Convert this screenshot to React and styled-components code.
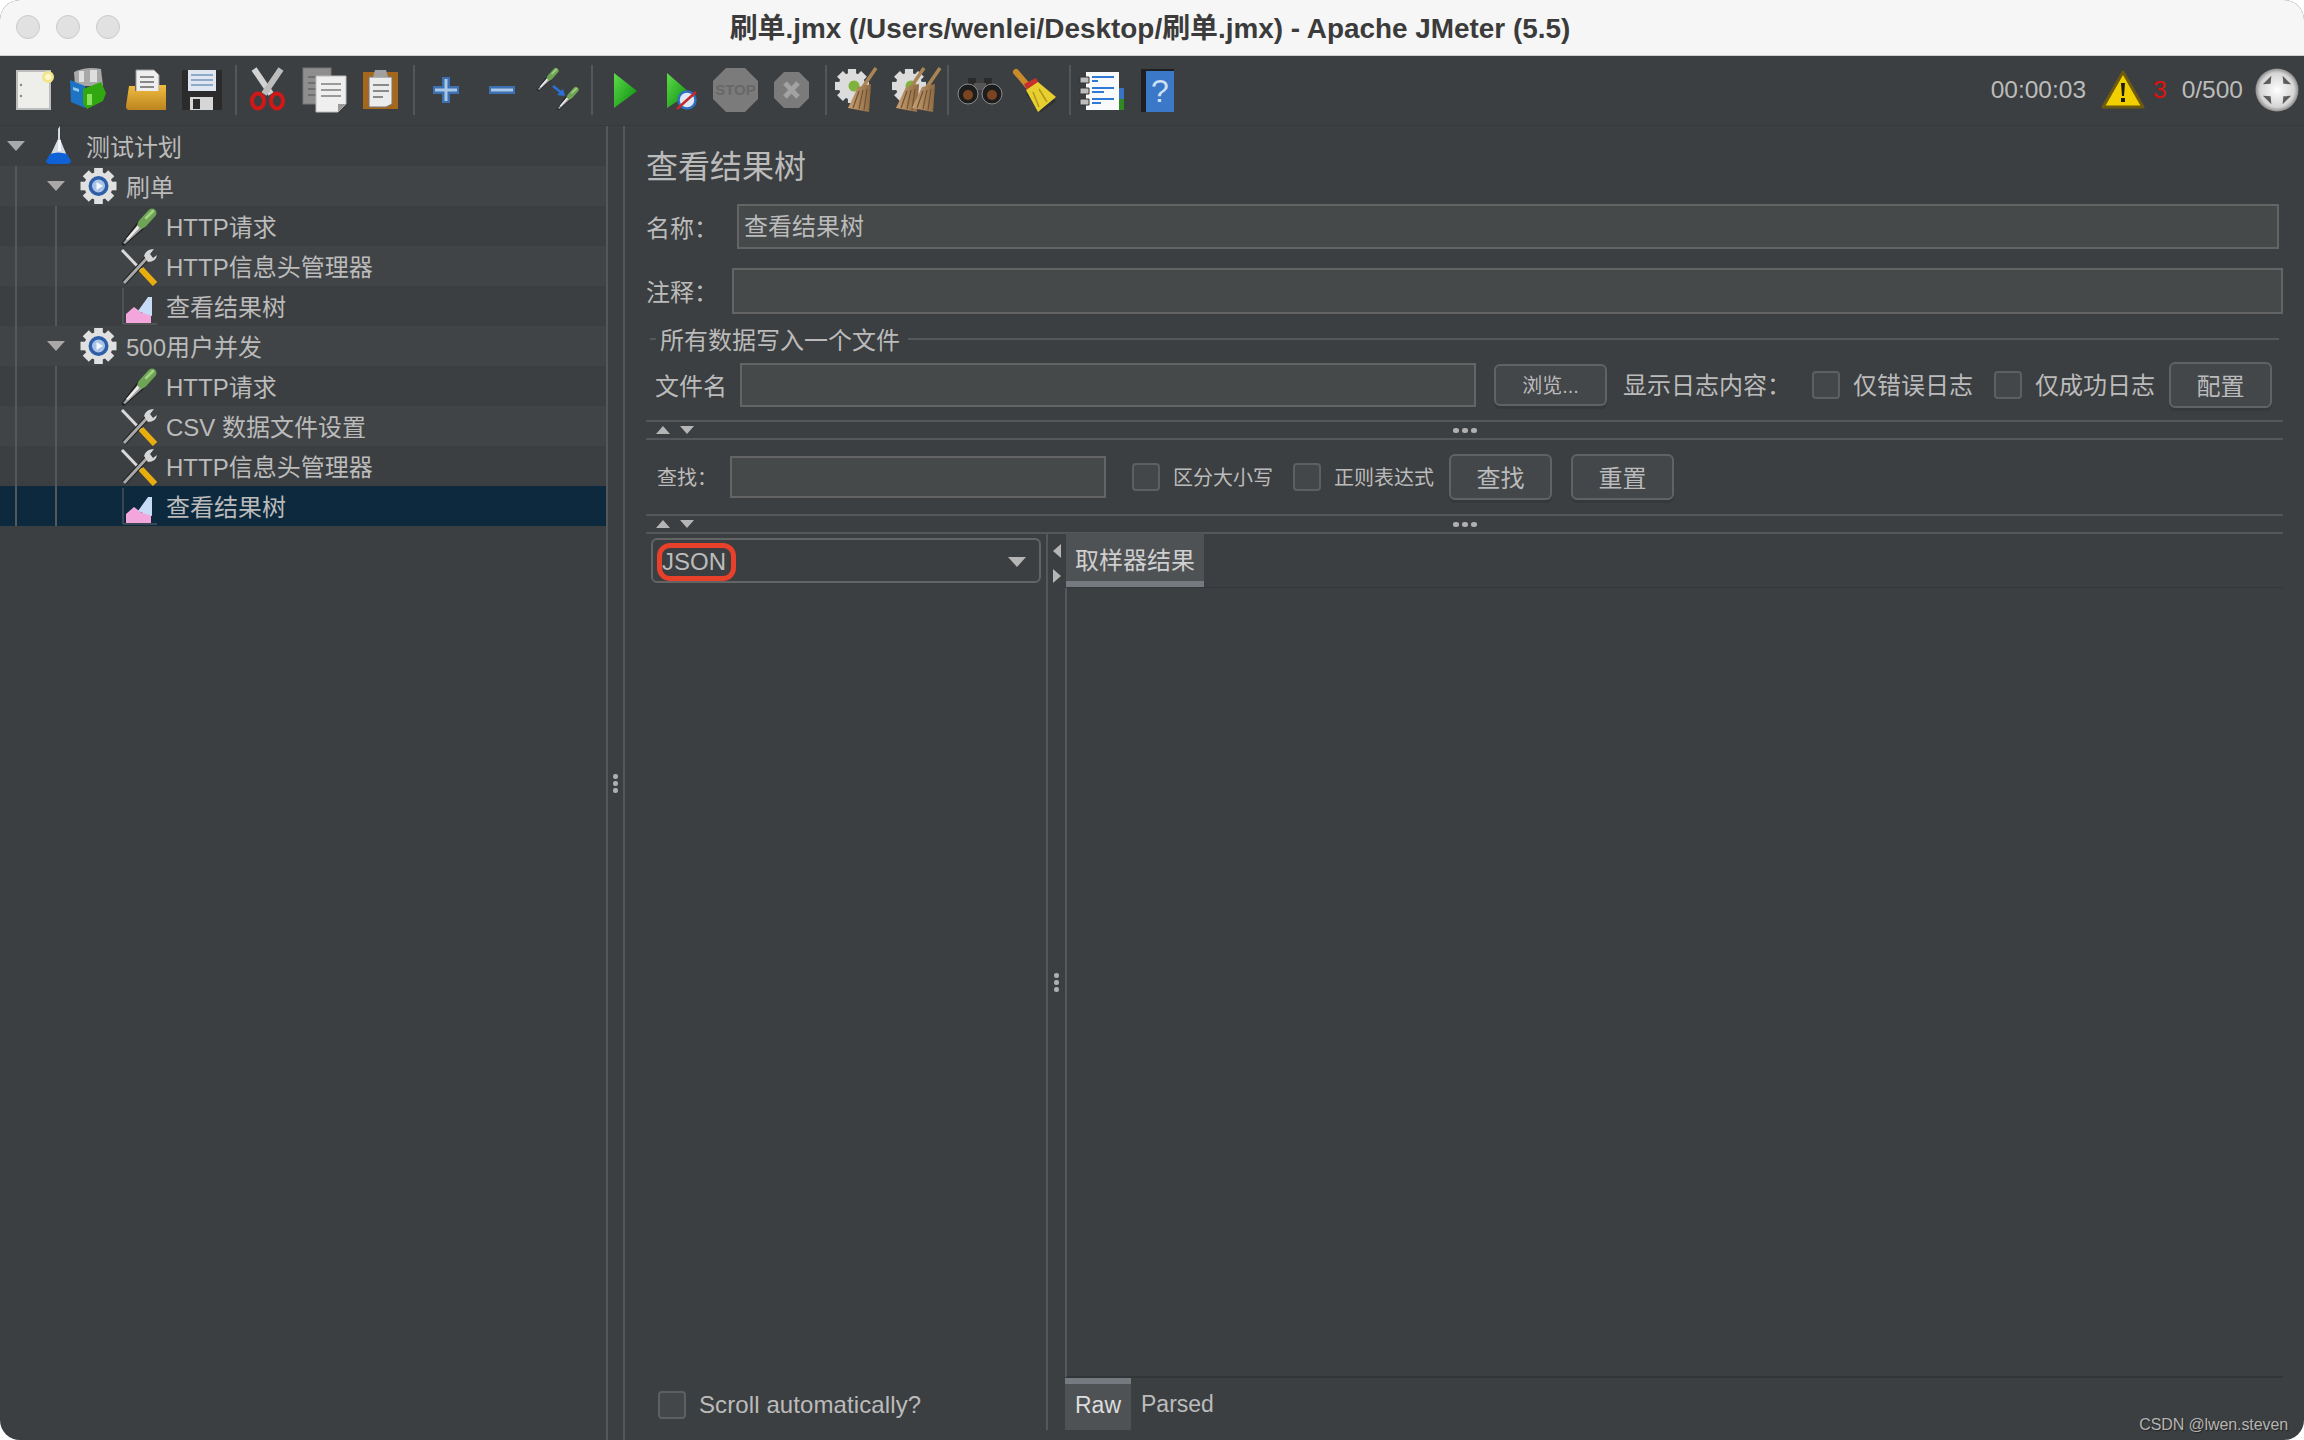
import React from 'react';
import styled, { createGlobalStyle } from 'styled-components';

const Global = createGlobalStyle`
  html, body { margin: 0; padding: 0; background: #fff; }
  * { box-sizing: border-box; }
  #root { width: 2304px; height: 1440px; }
`;
const FONT = `"Liberation Sans", "Noto Sans CJK SC", sans-serif`;
const Win = styled.div`
  width: 2304px; height: 1440px; border-radius: 20px; overflow: hidden; position: relative;
  background: #3c3f41; color: #bbbbbb; font-family: ${FONT}; font-size: 24px;
  display: flex; flex-direction: column;
`;
const TitleBar = styled.div`
  height: 56px; flex: none; background: #f6f6f6; border-bottom: 1px solid #d0d0d0;
  display: grid; grid-template-columns: 1fr auto 1fr; align-items: center; padding: 0 0 4px 16px;
`;
const Lights = styled.div`display: flex; gap: 16px; transform: translateY(1px);`;
const Light = styled.span`width: 24px; height: 24px; border-radius: 50%; background: #e1e1e1; border: 1px solid #c9c9c9;`;
const TitleText = styled.div`font-size: 27.9px; font-weight: 700; color: #3b3b3b; transform: translateX(-10px);`;
const Toolbar = styled.div`
  height: 70px; flex: none; display: flex; align-items: center; padding: 0 5px 2px 7px;
  background: #3c3f41; border-bottom: 1px solid #36393b;
`;
const ToolGroup = styled.div`display: flex;`;
const Sep = styled.div`width: 2px; height: 50px; background: #54575a; margin: 0 4px;`;
const ToolSvg = styled.svg`width: 56px; height: 48px; display: block; flex: none;`;
const Status = styled.div`margin-left: auto; display: flex; align-items: center; font-size: 24.5px;`;
const Warn = styled.svg`width: 44px; height: 40px; margin: 0 8px 0 15px;`;
const WarnCount = styled.span`color: #e01010; margin-right: 15px;`;
const Rotor = styled.svg`width: 44px; height: 44px; margin-left: 12px;`;
const Main = styled.div`flex: 1; display: flex; min-height: 0;`;
const Tree = styled.div`width: 608px; flex: none; border-right: 2px solid #55585a;`;
const Row = styled.div`
  height: 40px; position: relative; display: flex; align-items: center;
  padding-left: ${p => p.$level * 40}px;
  background: ${p => (p.$sel ? '#0d293e' : p.$stripe ? '#414446' : '#3c3f41')};
`;
const Guide = styled.i`position: absolute; left: ${p => p.$x}px; top: 0; bottom: 0; width: 2px; background: #55585a;`;
const CaretSlot = styled.span`width: 32px; flex: none; display: flex; justify-content: center;`;
const Caret = styled.span`width: 0; height: 0; border-left: 9px solid transparent; border-right: 9px solid transparent; border-top: 10px solid #a9a9a9;`;
const NodeIcon = styled.svg`width: 37px; height: 40px; flex: none; margin-left: 8px; margin-right: 9px;`;
const NodeText = styled.span`padding-bottom: 2px;`;
const Divider = styled.div`width: 17px; flex: none; border-right: 2px solid #55585a; display: flex; align-items: center; justify-content: center;`;
const Dots = styled.div`display: flex; flex-direction: ${p => (p.$row ? 'row' : 'column')}; gap: ${p => (p.$row ? 3 : 2)}px;`;
const Dot = styled.i`width: ${p => (p.$wide ? 6 : 5)}px; height: 5px; border-radius: 45%; background: #b0b0b0;`;
const Right = styled.div`flex: 1; min-width: 0; padding: 0 21px 10px 21px; display: flex; flex-direction: column;`;
const Heading = styled.div`font-size: 32px; line-height: 42px; padding-top: 20px; height: 78px; flex: none;`;
const FormRow = styled.div`display: flex; align-items: center; height: ${p => p.$h}px; margin: ${p => p.$m || '0'}; flex: none;`;
const FieldLabel = styled.div`
  width: ${p => p.$w}px; flex: none; font-size: ${p => p.$fs || 24}px; white-space: nowrap;
  margin-left: ${p => p.$ml || 0}px; padding-bottom: ${p => p.$up || 0}px;
`;
const Field = styled.div`
  height: ${p => p.$h || 45}px; flex: ${p => (p.$w ? 'none' : 1)}; width: ${p => (p.$w ? `${p.$w}px` : 'auto')};
  background: #45494a; border: 2px solid #646464; padding-left: 5px; line-height: 41px;
`;
const Legend = styled.div`display: flex; align-items: center; height: 30px; margin: 10px 4px 0 4px; flex: none;`;
const LegendLine = styled.i`height: 2px; background: #55585a; flex: ${p => (p.$w ? 'none' : 1)}; width: ${p => p.$w || 0}px;`;
const LegendText = styled.span`padding: 0 8px 2px 4px; white-space: nowrap;`;
const Btn = styled.div`
  width: ${p => p.$w}px; height: ${p => p.$h}px; flex: none; margin-left: ${p => p.$ml || 0}px;
  display: flex; align-items: center; justify-content: center; font-size: ${p => p.$fs || 24}px; padding-bottom: 2px;
  background: #43474a; border: 2px solid #606365; border-radius: 6px; box-shadow: 0 3px 0 #36393b;
`;
const Check = styled.span`width: 28px; height: 28px; flex: none; margin-left: ${p => p.$ml || 0}px; margin-right: ${p => p.$mr || 13}px; background: #434749; border: 2px solid #5c6062; border-radius: 4px;`;
const CheckText = styled.span`font-size: ${p => p.$fs || 24}px; white-space: nowrap; padding-bottom: ${p => p.$up || 0}px;`;
const Split = styled.div`
  height: 20px; flex: none; border-top: 2px solid #55585a; border-bottom: 2px solid #55585a;
  display: grid; grid-template-columns: 1fr auto 1fr; align-items: center;
`;
const SplitArrows = styled.div`display: flex; gap: 10px; padding-left: 10px;`;
const ArrowUp = styled.i`width: 0; height: 0; border-left: 7px solid transparent; border-right: 7px solid transparent; border-bottom: 8px solid #b5b5b5;`;
const ArrowDown = styled.i`width: 0; height: 0; border-left: 7px solid transparent; border-right: 7px solid transparent; border-top: 8px solid #b5b5b5;`;
const Lower = styled.div`flex: 1; min-height: 0; display: flex;`;
const LeftCol = styled.div`width: 402px; flex: none; border-right: 2px solid #55585a; display: flex; flex-direction: column; justify-content: space-between; padding: 4px 5px 11px 5px;`;
const Combo = styled.div`
  position: relative; height: 45px; width: 390px; border: 2px solid #646464; border-radius: 6px;
  display: flex; align-items: center; padding: 2px 13px 0 9px; justify-content: space-between;
`;
const ComboArrow = styled.i`width: 0; height: 0; border-left: 9px solid transparent; border-right: 9px solid transparent; border-top: 10px solid #b5b5b5;`;
const Annot = styled.i`position: absolute; left: 4px; top: 3px; width: 79px; height: 38px; border: 5px solid #e8402a; border-radius: 13px;`;
const ScrollRow = styled.div`display: flex; align-items: center; padding-left: 7px; letter-spacing: .1px;`;
const MiniSplit = styled.div`width: 17px; flex: none; display: grid; grid-template-rows: 1fr auto 1fr; justify-items: center;`;
const MiniArrows = styled.div`display: flex; flex-direction: column; gap: 11px; padding-top: 10px;`;
const ArrowL = styled.i`width: 0; height: 0; border-top: 7px solid transparent; border-bottom: 7px solid transparent; border-right: 8px solid #b5b5b5;`;
const ArrowR = styled.i`width: 0; height: 0; border-top: 7px solid transparent; border-bottom: 7px solid transparent; border-left: 8px solid #b5b5b5;`;
const Results = styled.div`flex: 1; min-width: 0; display: flex; flex-direction: column; margin-top: -1px;`;
const TabTop = styled.div`height: 55px; flex: none; border-bottom: 1px solid #35383a; display: flex; margin-left: 1px;`;
const TabActive = styled.div`
  width: 138px; background: #4e5254; border-bottom: 6px solid #747a80; display: flex; align-items: center; justify-content: center; padding-top: 3px; color: #cfcfcf;
`;
const ResultBody = styled.div`flex: 1; border-left: 2px solid #55585a; border-bottom: 2px solid #323537;`;
const TabBottom = styled.div`height: 52px; flex: none; display: flex; font-size: 23px; align-items: stretch;`;
const RawTab = styled.div`
  width: 66px; background: #4e5254; border-top: 6px solid #747a80; display: flex; align-items: center; justify-content: center; color: #dddddd; padding-bottom: 4px;
`;
const ParsedTab = styled.div`padding-left: 10px; display: flex; align-items: center; padding-bottom: 0;`;
const Mark = styled.div`
  position: absolute; right: 16px; bottom: 6px; font-size: 16px; letter-spacing: -.1px; color: #b4b4b4; text-shadow: 1px 1px 1px #222;
`;

const Grad = () => (
  <svg width="0" height="0" style={{ position: 'absolute' }}>
    <defs>
      <linearGradient id="gplay" x1="0" y1="0" x2="1" y2="1">
        <stop offset="0" stopColor="#5fdc4a" /><stop offset="1" stopColor="#058a0a" />
      </linearGradient>
      <linearGradient id="gbroom" x1="0" y1="0" x2="1" y2="0">
        <stop offset="0" stopColor="#c9a173" /><stop offset="1" stopColor="#8f6a42" />
      </linearGradient>
      <radialGradient id="grotor">
        <stop offset="0" stopColor="#ffffff" /><stop offset=".8" stopColor="#d4d4d4" /><stop offset="1" stopColor="#8c8c8c" />
      </radialGradient>
      <linearGradient id="gfolder" x1="0" y1="0" x2="0" y2="1">
        <stop offset="0" stopColor="#f0bd3f" /><stop offset="1" stopColor="#bd8420" />
      </linearGradient>
    </defs>
  </svg>
);

const GearShape = ({ cx, cy, r, fill = '#dcdcdc' }) => (
  <g>
    {[0, 45, 90, 135].map(a => (
      <rect key={a} x={cx - r * 0.24} y={cy - r} width={r * 0.48} height={r * 2} fill={fill} transform={`rotate(${a} ${cx} ${cy})`} />
    ))}
    <circle cx={cx} cy={cy} r={r * 0.78} fill={fill} />
  </g>
);
const Broom = ({ dx = 0 }) => (
  <g transform={`translate(${dx} 0)`}>
    <line x1="45" y1="2" x2="32" y2="21" stroke="#a98555" strokeWidth="3.5" />
    <path d="M27 21 L40 18 L38 46 L17 42Z" fill="url(#gbroom)" />
    <path d="M28 25 L22 42 M32 24 L28 43 M36 23 L33 44" stroke="#6f5236" strokeWidth="1.2" />
  </g>
);
const Pipette = ({ x = 0, y = 0, s = 1 }) => (
  <g transform={`translate(${x} ${y}) scale(${s})`}>
    <path d="M1 37 L19 13 L26 20 L4 39Z" fill="#1f1f1f" />
    <path d="M3 36 L19 16 L24 20 L5 37Z" fill="#a2a2a2" />
    <path d="M6 32 L19 17 L21 19 L8 33Z" fill="#ececec" />
    <line x1="22" y1="17" x2="32" y2="6" stroke="#6fa355" strokeWidth="9" strokeLinecap="round" />
    <line x1="26" y1="11" x2="33" y2="4" stroke="#a4d484" strokeWidth="2.5" strokeLinecap="round" />
  </g>
);

const tools = {
  new: <><rect x="10" y="5" width="33" height="38" fill="#eeeeea" stroke="#bdbdbd" strokeWidth="2" /><circle cx="41" cy="11" r="6" fill="#f3e58d" /><circle cx="41" cy="11" r="3" fill="#fff8cc" /><circle cx="14" cy="19" r="1.2" fill="#888" /><circle cx="14" cy="30" r="1.2" fill="#888" /></>,
  templates: <><path d="M11 6 Q24 0 38 3 L40 20 L12 20Z" fill="#a8a8a8" /><path d="M16 5h5v11h-5zM27 4h7v12h-7z" fill="#dedede" /><path d="M7 14 L22 20 L22 42 L8 36Z" fill="#1d73c4" /><path d="M10 21l6 2v3l-6-2z" fill="#8fc7ee" /><path d="M20 23 L38 16 L43 27 L40 35 L24 43 L20 38Z" fill="#31a710" /><path d="M24 28h5v11h-5z" fill="#8be05f" /></>,
  open: <><path d="M17 4h18l5 5v20H17z" fill="#eeeeee" stroke="#999" /><path d="M21 11h14M21 16h14M21 21h14" stroke="#888" strokeWidth="2" /><path d="M10 20 H16 V25 H40 V19 H47 V44 H10 Q7 44 7 40Z" fill="url(#gfolder)" /></>,
  save: <><path d="M7 4h40v40H7z" fill="#2b2b2b" /><rect x="13" y="4" width="28" height="21" fill="#dfe6f0" /><path d="M16 9h22M16 14h22M16 19h22" stroke="#8fa9c9" strokeWidth="2" /><rect x="15" y="31" width="23" height="13" fill="#d6d6d6" /><rect x="18" y="33" width="7" height="10" fill="#2b2b2b" /></>,
  cut: <><line x1="13" y1="3" x2="30" y2="28" stroke="#d2d2d2" strokeWidth="6" /><line x1="40" y1="3" x2="23" y2="28" stroke="#bdbdbd" strokeWidth="6" /><ellipse cx="17" cy="35" rx="6" ry="7.5" fill="none" stroke="#d01818" strokeWidth="4" /><ellipse cx="36" cy="35" rx="6" ry="7.5" fill="none" stroke="#d01818" strokeWidth="4" /></>,
  copy: <><rect x="6" y="2" width="28" height="36" fill="#8e8e8e" stroke="#777" /><path d="M11 11h18M11 17h18M11 23h18M11 29h18" stroke="#6f6f6f" strokeWidth="2" /><path d="M19 10h30v28l-8 8H19z" fill="#efefef" stroke="#bbb" /><path d="M24 18h20M24 24h20M24 30h20" stroke="#9a9a9a" strokeWidth="2" /><path d="M41 46v-8h8z" fill="#999" /></>,
  paste: <><rect x="10" y="6" width="35" height="37" fill="#a5671c" /><path d="M16 11h23v27l-6 3H16z" fill="#ececec" stroke="#777" /><path d="M20 19h16M20 25h16M20 31h10" stroke="#8a8a8a" strokeWidth="2" /><path d="M20 11 L22 4 H33 L35 11Z" fill="#a0a0a0" /></>,
  plus: <><path d="M27 11v26M14 24h26" stroke="#3d70b0" strokeWidth="8" /><path d="M27 13v22M16 24h22" stroke="#a9c7e8" strokeWidth="3" /></>,
  minus: <><path d="M14 24h26" stroke="#3d70b0" strokeWidth="8" /><path d="M16 24h22" stroke="#a9c7e8" strokeWidth="3" /></>,
  toggle: <><Pipette x="5" y="1" s="0.62" /><Pipette x="25" y="20" s="0.62" /><path d="M22 20 L32 28" stroke="#2a72d8" strokeWidth="2.5" /><path d="M34 30l-8-1 6-6z" fill="#2a72d8" /></>,
  start: <path d="M17 7 L40 25 L17 42Z" fill="url(#gplay)" />,
  startNo: <><path d="M14 7 L37 27 L14 42Z" fill="url(#gplay)" /><circle cx="34" cy="34" r="8.5" fill="#dfe9f6" stroke="#2f6fc0" strokeWidth="2.5" /><line x1="24" y1="43" x2="43" y2="26" stroke="#c8282a" strokeWidth="2.5" /></>,
  stop: <><path d="M17 2h19l13 13v18L36 46H17L4 33V15z" fill="#7b7b7b" /><text x="26.5" y="29" fontSize="15" fontFamily="Liberation Sans" fontWeight="700" textAnchor="middle" fill="#686868">STOP</text></>,
  shut: <><path d="M19 6h15l10 10v16L34 42H19L9 32V16z" fill="#7b7b7b" /><path d="M20 17l13 14M33 17L20 31" stroke="#a2a2a2" strokeWidth="5" /></>,
  clear: <><GearShape cx="21" cy="20" r="17" /><circle cx="23" cy="20" r="5.5" fill="#7fb23e" /><Broom /></>,
  clearAll: <><GearShape cx="22" cy="20" r="17" /><circle cx="24" cy="20" r="5.5" fill="#7fb23e" /><Broom dx="-8" /><Broom dx="8" /></>,
  search: <><rect x="15" y="12" width="8" height="14" fill="#2a2a2a" /><rect x="31" y="12" width="8" height="14" fill="#2a2a2a" /><rect x="21" y="17" width="12" height="7" fill="#555" /><circle cx="15" cy="28" r="10" fill="#1d1d1d" stroke="#8c8c8c" /><circle cx="39" cy="28" r="10" fill="#1d1d1d" stroke="#8c8c8c" /><circle cx="15" cy="29" r="5" fill="#7a4520" /><circle cx="39" cy="29" r="5" fill="#7a4520" /></>,
  broom: <><path d="M17 28 L29 20 L47 35 L32 46Z" fill="#22252a" opacity=".55" /><line x1="7" y1="6" x2="19" y2="20" stroke="#c98a2c" strokeWidth="6" strokeLinecap="round" /><path d="M15 18 L27 12 L31 19 L19 26Z" fill="#c7312b" /><path d="M17 24 L29 16 L47 31 L29 46Z" fill="#e6cf2e" /><path d="M24 26 L30 41M30 23 L38 36" stroke="#b3971c" strokeWidth="1.5" /></>,
  log: <><rect x="41" y="22" width="8" height="13" fill="#3973c6" /><rect x="41" y="33" width="8" height="11" fill="#2f8a22" /><rect x="11" y="6" width="33" height="38" fill="#fafafa" /><path d="M5 11h9v6H5zM5 22h9v6H5zM5 33h9v6H5z" fill="#bdbdbd" stroke="#333" strokeWidth="1" /><path d="M17 11h22M17 15h6M17 22h22M17 26h12M17 33h22M17 37h9" stroke="#2f7ad6" strokeWidth="2" /></>,
  help: <><rect x="10" y="3" width="33" height="43" fill="#1f1f1f" /><rect x="15" y="5" width="28" height="41" fill="#3c78c8" /><text x="29" y="36" fontSize="32" fontFamily="Liberation Sans" textAnchor="middle" fill="#cfe0f5">?</text></>,
};
const groups = [
  ['new', 'templates', 'open', 'save'], ['cut', 'copy', 'paste'], ['plus', 'minus', 'toggle'],
  ['start', 'startNo', 'stop', 'shut'], ['clear', 'clearAll'], ['search', 'broom'], ['log', 'help'],
];

const nodeArt = {
  flask: <><path d="M20 0v13L27 30H10L18 13V3z" fill="#d5dbe3" /><path d="M10 28 Q18 25 27 28 L31 35 Q31 38 26 38 H11 Q6 38 6 35Z" fill="#0f62d6" /><path d="M18 14h3v11h-3z" fill="#f4f6f9" /></>,
  gear: <><GearShape cx="18.5" cy="20" r="18" fill="#e0e0e0" /><circle cx="18.5" cy="20" r="10" fill="#2f5ea8" /><circle cx="18.5" cy="20" r="6.5" fill="#a9c4e6" /><path d="M16.5 16 L23 20 L16.5 24Z" fill="#f4f8ff" /></>,
  pipette: <Pipette y="1" />,
  tools: <><line x1="2" y1="4" x2="22" y2="25" stroke="#d8d8d8" strokeWidth="3" /><line x1="21" y1="23" x2="35" y2="38" stroke="#e8ae0e" strokeWidth="6" /><line x1="4" y1="37" x2="28" y2="11" stroke="#222" strokeWidth="5" /><line x1="4" y1="37" x2="28" y2="11" stroke="#a8a8a8" strokeWidth="3" /><path d="M24 10 Q26 3 34 3 L30 8 L33 12 L37 9 Q36 16 28 16Z" fill="#d6d6d6" /></>,
  graph: <><path d="M3 2v36h34" stroke="#666" strokeWidth="1" fill="none" /><path d="M6 37 V28 L14 21 L22 27 L31 20 V37Z" fill="#f3a6dc" /><path d="M18 25 L28 11 H32 V30 L23 27Z" fill="#c8dcf7" /></>,
};
const nodes = [
  { level: 0, open: true, icon: 'flask', text: '测试计划', guides: [] },
  { level: 1, open: true, icon: 'gear', text: '刷单', guides: [15], stripe: true },
  { level: 2, icon: 'pipette', text: 'HTTP请求', guides: [15, 55] },
  { level: 2, icon: 'tools', text: 'HTTP信息头管理器', guides: [15, 55], stripe: true },
  { level: 2, icon: 'graph', text: '查看结果树', guides: [15, 55] },
  { level: 1, open: true, icon: 'gear', text: '500用户并发', guides: [15], stripe: true },
  { level: 2, icon: 'pipette', text: 'HTTP请求', guides: [15, 55] },
  { level: 2, icon: 'tools', text: 'CSV 数据文件设置', guides: [15, 55], stripe: true },
  { level: 2, icon: 'tools', text: 'HTTP信息头管理器', guides: [15, 55] },
  { level: 2, icon: 'graph', text: '查看结果树', guides: [15, 55], sel: true },
];

const ThreeDots = ({ row }) => (
  <Dots $row={row}><Dot $wide={row} /><Dot $wide={row} /><Dot $wide={row} /></Dots>
);
const SplitBar = () => (
  <Split>
    <SplitArrows><ArrowUp /><ArrowDown /></SplitArrows>
    <ThreeDots row />
    <span />
  </Split>
);

export default function App() {
  return (
    <Win>
      <Global />
      <Grad />
      <TitleBar>
        <Lights><Light /><Light /><Light /></Lights>
        <TitleText>刷单.jmx (/Users/wenlei/Desktop/刷单.jmx) - Apache JMeter (5.5)</TitleText>
        <span />
      </TitleBar>
      <Toolbar>
        {groups.map((g, i) => (
          <React.Fragment key={i}>
            {i > 0 && <Sep />}
            <ToolGroup>
              {g.map(n => (
                <ToolSvg key={n} viewBox="0 0 56 48">{tools[n]}</ToolSvg>
              ))}
            </ToolGroup>
          </React.Fragment>
        ))}
        <Status>
          <span>00:00:03</span>
          <Warn viewBox="0 0 44 40">
            <path d="M22 2 L42 37 H2Z" fill="#f2d000" stroke="#6b5a10" strokeWidth="3" strokeLinejoin="round" />
            <path d="M20 13h4l-1 13h-2z" fill="#1c1c1c" />
            <rect x="20" y="28" width="4" height="4" fill="#1c1c1c" />
          </Warn>
          <WarnCount>3</WarnCount>
          <span>0/500</span>
          <Rotor viewBox="0 0 44 44">
            <circle cx="22" cy="22" r="21.5" fill="url(#grotor)" />
            <path d="M16 8h12l-6 5zM16 36h12l-6-5z M8 16v12l5-6zM36 16v12l-5-6z" fill="#5c5c5c" transform="rotate(45 22 22)" />
          </Rotor>
        </Status>
      </Toolbar>
      <Main>
        <Tree>
          {nodes.map((n, i) => (
            <Row key={i} $level={n.level} $sel={n.sel} $stripe={n.stripe}>
              {n.guides.map(x => <Guide key={x} $x={x} />)}
              <CaretSlot>{n.open && <Caret />}</CaretSlot>
              <NodeIcon viewBox="0 0 37 40">{nodeArt[n.icon]}</NodeIcon>
              <NodeText>{n.text}</NodeText>
            </Row>
          ))}
        </Tree>
        <Divider><ThreeDots /></Divider>
        <Right>
          <Heading>查看结果树</Heading>
          <FormRow $h={45} $m="0 4px 0 0">
            <FieldLabel $w={91}>名称：</FieldLabel>
            <Field>查看结果树</Field>
          </FormRow>
          <FormRow $h={46} $m="19px 0 0 0">
            <FieldLabel $w={86} $up={2}>注释：</FieldLabel>
            <Field $h={46} />
          </FormRow>
          <Legend>
            <LegendLine $w={6} />
            <LegendText>所有数据写入一个文件</LegendText>
            <LegendLine />
          </Legend>
          <FormRow $h={46} $m="8px 0 12px 9px">
            <FieldLabel $w={85} $up={2}>文件名</FieldLabel>
            <Field $w={736} $h={44} />
            <Btn $w={113} $h={42} $ml={18} $fs={20}>浏览...</Btn>
            <FieldLabel $w={189} $ml={16} $up={4}>显示日志内容：</FieldLabel>
            <Check />
            <CheckText $up={4}>仅错误日志</CheckText>
            <Check $ml={21} />
            <CheckText $up={4}>仅成功日志</CheckText>
            <Btn $w={103} $h={46} $ml={14}>配置</Btn>
          </FormRow>
          <SplitBar />
          <FormRow $h={74} $m="0 0 0 11px">
            <FieldLabel $w={73} $fs={20} $up={2}>查找：</FieldLabel>
            <Field $w={376} $h={42} />
            <Check $ml={26} />
            <CheckText $fs={20} $up={2}>区分大小写</CheckText>
            <Check $ml={20} />
            <CheckText $fs={20} $up={2}>正则表达式</CheckText>
            <Btn $w={103} $h={46} $ml={15}>查找</Btn>
            <Btn $w={103} $h={46} $ml={19}>重置</Btn>
          </FormRow>
          <SplitBar />
          <Lower>
            <LeftCol>
              <Combo>
                <span>JSON</span>
                <ComboArrow />
                <Annot />
              </Combo>
              <ScrollRow>
                <Check />
                <CheckText>Scroll automatically?</CheckText>
              </ScrollRow>
            </LeftCol>
            <MiniSplit>
              <MiniArrows><ArrowL /><ArrowR /></MiniArrows>
              <ThreeDots />
              <span />
            </MiniSplit>
            <Results>
              <TabTop><TabActive>取样器结果</TabActive></TabTop>
              <ResultBody />
              <TabBottom>
                <RawTab>Raw</RawTab>
                <ParsedTab>Parsed</ParsedTab>
              </TabBottom>
            </Results>
          </Lower>
        </Right>
      </Main>
      <Mark>CSDN @lwen.steven</Mark>
    </Win>
  );
}
